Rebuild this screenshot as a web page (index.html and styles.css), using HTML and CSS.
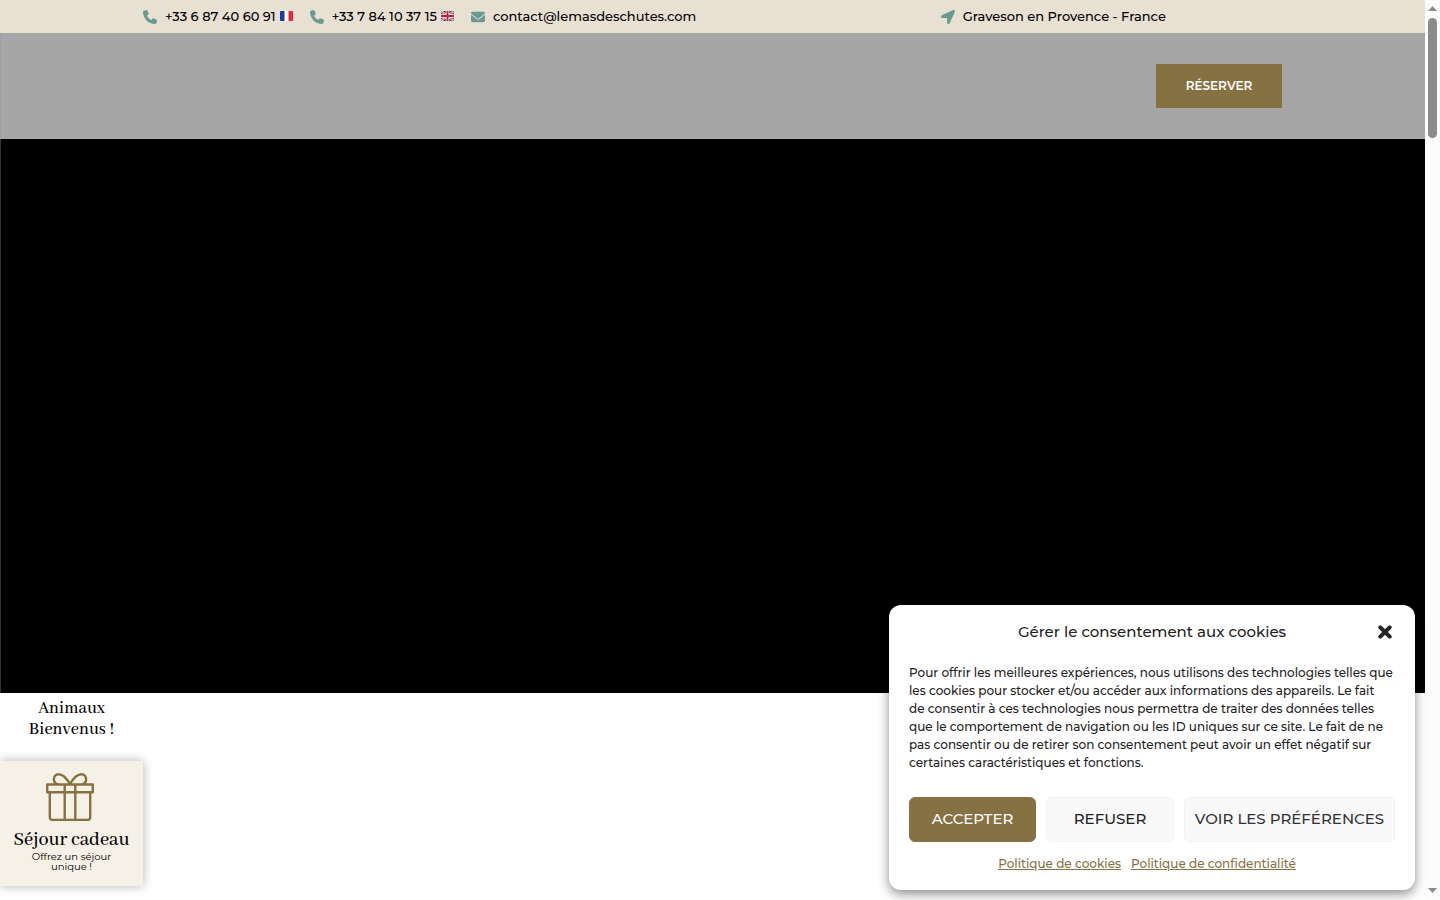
FILE: index.html
```html
<!DOCTYPE html>
<html lang="fr">
<head>
<meta charset="utf-8">
<meta name="viewport" content="width=device-width, initial-scale=1">
<title>Le Mas des Chutes</title>
<link rel="stylesheet" href="styles.css">
</head>
<body>
<svg class="defs" aria-hidden="true">
  <symbol id="phone" viewBox="0 0 512 512"><path d="M164.900 24.600c-7.700-18.600-28-28.500-47.400-23.200l-88 24C12.100 30.200 0 46 0 64c0 247.400 200.600 448 448 448 18 0 33.800-12.100 38.600-29.500l24-88c5.300-19.400-4.600-39.700-23.200-47.400l-96-40c-16.300-6.800-35.200-2.100-46.300 11.600L304.700 368C234.300 334.700 177.300 277.700 144 207.300L193.300 167c13.700-11.200 18.400-30 11.600-46.300l-40-96z"/></symbol>
</svg>
<div class="page">
  <div class="site">
    <div class="intro">
      <div class="topbar">
        <div class="contacts">
          <a class="contact" href="tel:+33687406091"><svg class="icon"><use href="#phone"/></svg><span>+33 6 87 40 60 91</span>
            <svg class="flag" viewBox="0 0 13 10"><path fill="#fff" d="M0 0h13v10H0z"/><path fill="#1b3a9c" d="M1 0h3.500v10H1a1 1 0 0 1-1-1V1a1 1 0 0 1 1-1z"/><path fill="#ed2939" d="M8.500 0H12a1 1 0 0 1 1 1v8a1 1 0 0 1-1 1H8.500z"/></svg></a>
          <a class="contact" href="tel:+33784103715"><svg class="icon"><use href="#phone"/></svg><span>+33 7 84 10 37 15</span>
            <svg class="flag" viewBox="0 0 13 10"><rect width="13" height="10" rx="1" fill="#33437e"/><path stroke="#fff" stroke-width="2" d="M0 0l13 10M13 0L0 10"/><path stroke="#cf1b2b" stroke-width=".8" d="M0 0l13 10M13 0L0 10"/><path stroke="#fff" stroke-width="3.400" d="M6.500 0v10M0 5h13"/><path stroke="#cf1b2b" stroke-width="2" d="M6.500 0v10M0 5h13"/></svg></a>
          <a class="contact" href="mailto:contact@lemasdeschutes.com"><svg class="icon" viewBox="0 0 512 512"><path d="M48 64C21.500 64 0 85.500 0 112c0 15.100 7.100 29.300 19.200 38.400l217.600 163.200c11.400 8.500 27 8.500 38.400 0l217.600-163.200c12.100-9.100 19.200-23.300 19.200-38.400 0-26.500-21.500-48-48-48zM0 176v208c0 35.300 28.700 64 64 64h384c35.300 0 64-28.700 64-64V176L294.400 339.200c-22.800 17.100-54 17.100-76.800 0z"/></svg><span>contact@lemasdeschutes.com</span></a>
        </div>
        <div class="place"><svg class="icon" viewBox="0 0 512 512"><path d="M444.500 3.500L28.700 195.400c-48 22.400-32 92.800 19.200 92.800h175.900v175.900c0 51.200 70.400 67.200 92.800 19.200L508.500 67.500c16-38.400-25.600-80-64-64z"/></svg><span>Graveson en Provence - France</span></div>
      </div>
      <header class="header"><a class="book" href="#reserver">RÉSERVER</a></header>
      <main class="hero"></main>
    </div>
    <div class="side">
      <p class="pets">Animaux<br>Bienvenus !</p>
      <a class="gift" href="#cadeau">
        <svg class="gift-icon" viewBox="0 0 48 48" fill="none" stroke="#867142" stroke-width="2.400" stroke-linejoin="round"><path d="M1.200 11.500h45.600v7.700H1.200zM3.800 19.200v25a2.700 2.700 0 0 0 2.700 2.700h35a2.700 2.700 0 0 0 2.700-2.700v-25M18.700 11.500v35.400M29.300 11.500v35.400M24 11c-3.500-6-7.500-9.800-11.500-9.800C6.500 1.200 6 11.500 13 11.500M24 11c3.500-6 7.500-9.800 11.500-9.800 6 0 6.500 10.300-.5 10.300"/></svg>
        <strong>Séjour cadeau</strong>
        <span>Offrez un séjour<br>unique !</span>
      </a>
    </div>
    <section class="consent" role="dialog" aria-labelledby="consent-title">
      <div class="consent-head">
        <h2 id="consent-title">Gérer le consentement aux cookies</h2>
        <button class="close" type="button" aria-label="Fermer"><svg viewBox="0 0 14 14"><path d="M2.300 2.300l9.400 9.400M11.700 2.300l-9.400 9.400" stroke="#222" stroke-width="4" stroke-linecap="round"/></svg></button>
      </div>
      <p class="consent-text">Pour offrir les meilleures expériences, nous utilisons des technologies telles que les cookies pour stocker et/ou accéder aux informations des appareils. Le fait<br>de consentir à ces technologies nous permettra de traiter des données telles<br>que le comportement de navigation ou les ID uniques sur ce site. Le fait de ne<br>pas consentir ou de retirer son consentement peut avoir un effet négatif sur certaines caractéristiques et fonctions.</p>
      <div class="choices">
        <button class="choice accept" type="button">ACCEPTER</button>
        <button class="choice" type="button">REFUSER</button>
        <button class="choice prefs" type="button">VOIR LES PRÉFÉRENCES</button>
      </div>
      <nav class="links"><a href="#cookies">Politique de cookies</a><a href="#confidentialite">Politique de confidentialité</a></nav>
    </section>
  </div>
  <div class="scrollbar" aria-hidden="true">
    <svg viewBox="0 0 9 5"><path d="M4.500 0L9 5H0z"/></svg>
    <div class="thumb"></div>
    <svg class="down" viewBox="0 0 9 5"><path d="M0 0h9L4.500 5z"/></svg>
  </div>
</div>
</body>
</html>
```
FILE: styles.css
```css
* { box-sizing: border-box; }
body { margin: 0; background: #fff; color: #000; font-family: Montserrat, Inter, sans-serif; font-weight: 500; }
h2, p { margin: 0; font-weight: inherit; }
svg { display: block; flex: none; }
.defs { display: none; }
.page { display: flex; min-height: 100vh; }
.site { position: relative; flex: 1; min-width: 0; }
.intro { display: flex; flex-direction: column; min-height: 77vh; }

.topbar { display: grid; grid-template-columns: 70% 30%; align-items: center; height: 33px; padding: 0 143px 0 141px; background: #e8e0d3; font-size: 13px; line-height: 20px; white-space: nowrap; }
.contacts { display: flex; gap: 16px; padding-left: 1px; }
.contact, .place { display: flex; align-items: center; color: inherit; text-decoration: none; }
.contact span, .place span { padding-bottom: 2px; }
.icon { width: 14px; height: 14px; margin: 0 8px 0 1px; fill: #699a8e; }
.flag { width: 13px; height: 10px; margin: 0 0 2px 4px; }

.header { display: flex; align-items: center; justify-content: flex-end; height: 106px; padding: 0 143px; border-left: 1px solid #9ba1a8; background: #a6a6a6; }
.book { width: 126px; height: 44px; background: #867142; color: #fff; font-size: 12px; font-weight: 600; line-height: 43px; text-align: center; text-decoration: none; }
.hero { flex: 1; border-left: 1px solid #333; background: #000; }

.side { position: absolute; left: 0; bottom: 14px; width: 143px; text-align: center; }
.pets { margin-bottom: 21px; font-family: "Abhaya Libre", "Liberation Serif", serif; font-size: 18px; line-height: 21px; }
.gift { display: flex; flex-direction: column; align-items: center; height: 125px; padding-top: 12px; background: #f6f1e7; box-shadow: 0 0 10px rgba(0, 0, 0, .3); color: #000; text-decoration: none; }
.gift-icon { width: 48px; height: 48px; margin-right: 3px; }
.gift strong { margin-top: 8px; font: 500 20px/22px "Abhaya Libre", "Liberation Serif", serif; }
.gift span { margin-top: 1px; font-size: 10px; font-weight: 400; line-height: 10px; }

.consent { position: absolute; right: 10px; bottom: 10px; width: 526px; padding: 15px 20px 17px; background: #fff; border-radius: 12px; box-shadow: 0 4px 12px rgba(0, 0, 0, .45); color: #222; }
.consent-head { display: grid; grid-template-columns: 1fr auto; align-items: center; height: 24px; margin-bottom: 20px; }
.consent h2 { padding-left: 20px; font-size: 15px; line-height: 24px; text-align: center; }
.close { padding: 3px; border: 0; background: none; }
.close svg { width: 14px; height: 14px; }
.consent-text { font-size: 12px; line-height: 18px; }
.choices { display: grid; grid-template-columns: 127px 128px 1fr; gap: 10px; margin-top: 25px; }
.choice { height: 45px; padding: 0 0 2px; border: 1px solid #f2f2f2; border-radius: 6px; background: #f9f9f9; color: #222; font-family: inherit; font-size: 15px; font-weight: 500; white-space: nowrap; }
.accept { border-color: #867142; background: #867142; color: #fff; }
.prefs { color: #333; }
.links { display: flex; justify-content: center; gap: 10px; margin-top: 13px; padding-right: 10px; font-size: 12px; line-height: 18px; }
.links a { color: #867142; }

.scrollbar { display: flex; flex-direction: column; align-items: center; width: 15px; padding: 6px 0 7px; background: #fcfcfc; }
.scrollbar svg { width: 9px; height: 5px; fill: #8b8b8b; }
.thumb { width: 9px; height: 120px; margin-top: 7px; border-radius: 5px; background: #8b8b8b; }
.scrollbar .down { margin-top: auto; }
```
